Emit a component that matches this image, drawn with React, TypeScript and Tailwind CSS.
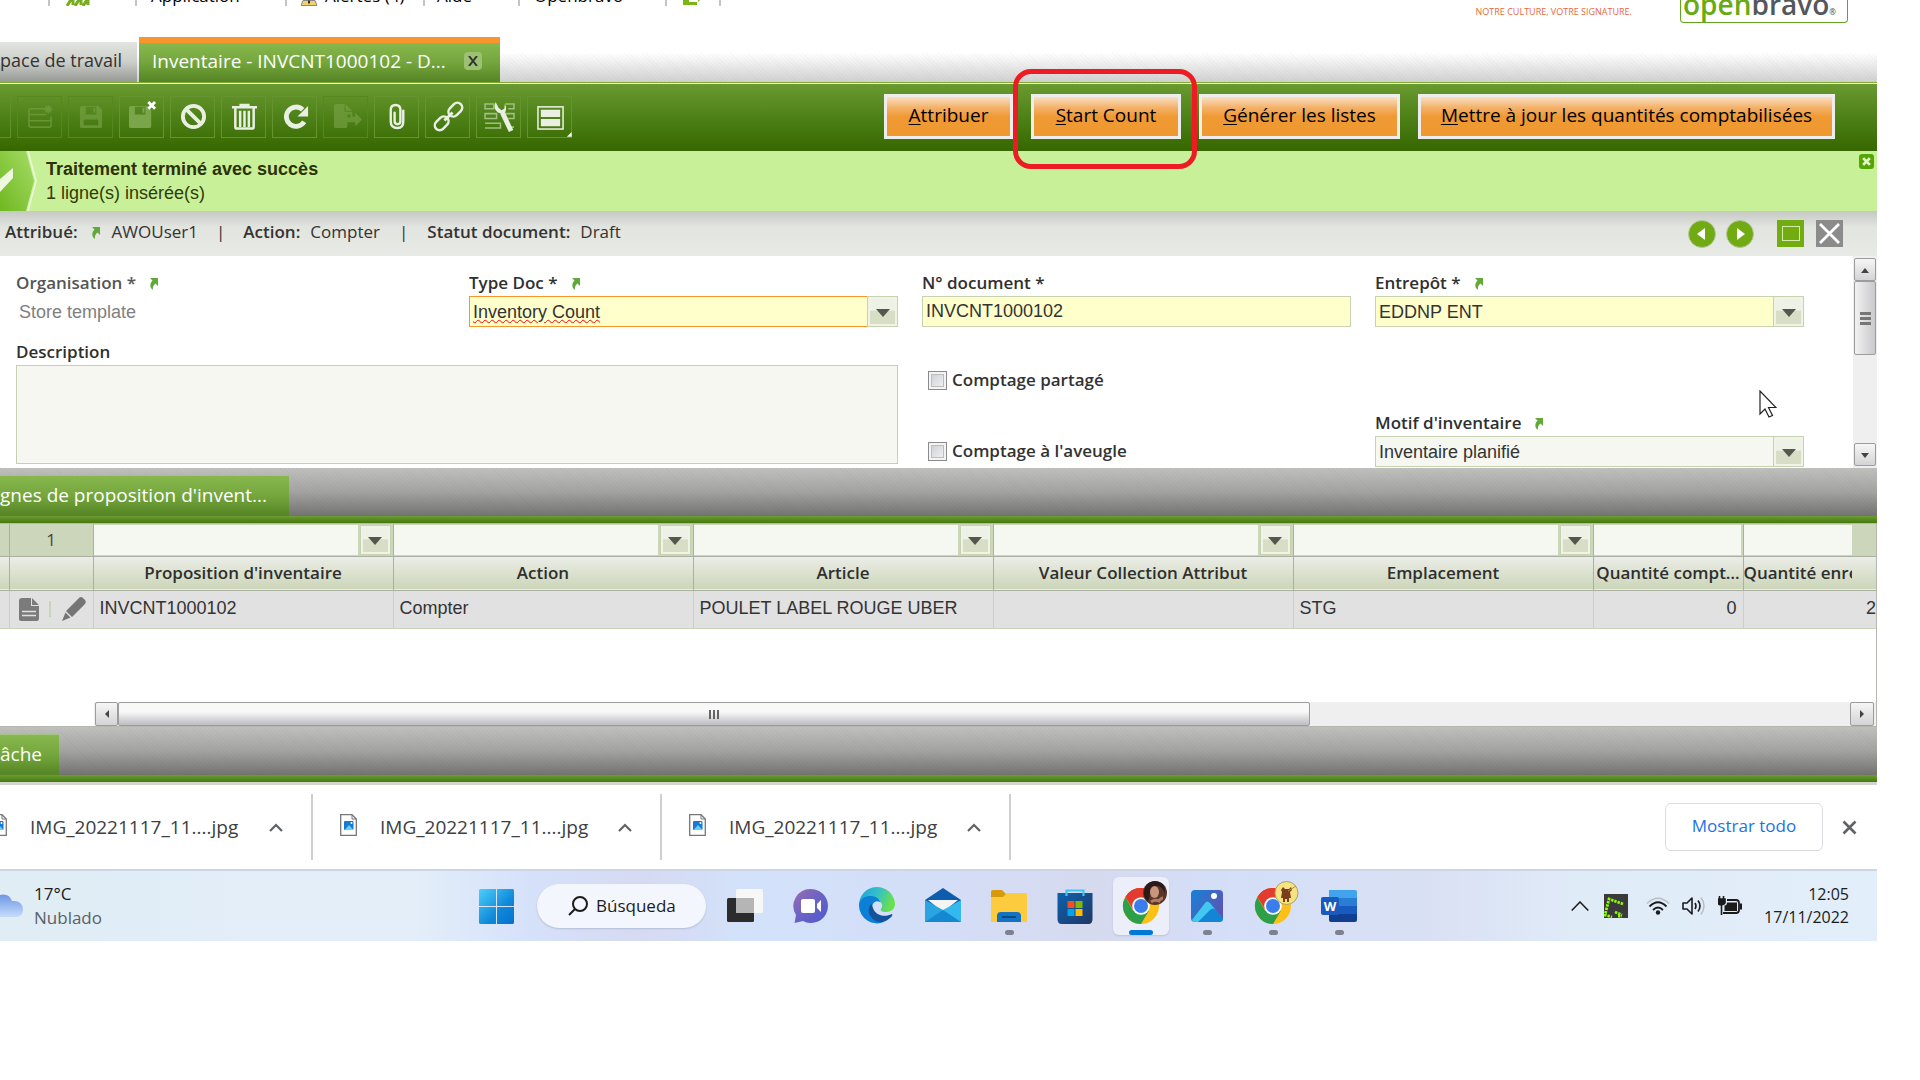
import React, { useId } from "react";

const STRIPES =
  "bg-[repeating-linear-gradient(45deg,rgba(0,0,0,0.02)_0px,rgba(0,0,0,0.02)_1px,transparent_1px,transparent_3px)]";

function LinkArrow() {
  return (
    <svg viewBox="0 0 10 13" className="h-[13px] w-[10px] shrink-0" aria-hidden="true">
      <path d="M2 1h8v8l-2.500-2.500C5.500 8 4.500 10 5 13 1.500 10.500 1.500 6.500 4.500 3.500z" fill="#63a83a" />
    </svg>
  );
}

function ArrowButton({ label }: { label: string }) {
  return (
    <button
      type="button"
      aria-label={label}
      className="flex w-[31px] shrink-0 items-center justify-center border border-[#c7d3b0] bg-linear-to-b from-[#eef1e6] from-45% to-[#d8dec6] to-50% shadow-[inset_0_0_0_2px_#f0f4e6]"
    >
      <svg viewBox="0 0 14 8" className="mt-[2px] h-[8px] w-[14px]">
        <path d="M0 0h14L7 8z" fill="#55564d" />
      </svg>
    </button>
  );
}

function FieldLabel({ id, text, link, dim }: { id?: string; text: string; link?: boolean; dim?: boolean }) {
  return (
    <div className="flex h-[26px] items-center gap-3">
      <label htmlFor={id} className={dim ? "font-semibold text-[#555]" : "font-semibold text-[#2f2f2f]"}>
        {text}
      </label>
      {link && <LinkArrow />}
    </div>
  );
}

function Combo({ label, value, tone }: { label: string; value: string; tone: "focus" | "required" | "plain" }) {
  const id = useId();
  const tones = {
    focus: "border-[#f8952d] bg-[#ffffcc] underline decoration-[#f00] decoration-wavy decoration-1 underline-offset-1",
    required: "border-[#c7d3b0] bg-[#ffffcc]",
    plain: "border-[#c7d3b0] bg-[#f5f7f0]",
  };
  return (
    <div className="min-w-0">
      <FieldLabel id={id} text={label} link />
      <div className="flex h-[31px]">
        <input
          id={id}
          defaultValue={value}
          spellCheck={false}
          className={
            "min-w-0 flex-1 border border-r-0 px-[3px] font-['Liberation_Sans',sans-serif] text-[18px] text-[#333] outline-none " +
            tones[tone]
          }
        />
        <ArrowButton label={"Ouvrir " + label} />
      </div>
    </div>
  );
}

function Check({ label, className }: { label: string; className: string }) {
  return (
    <label className={"flex h-[20px] items-center gap-[5px] font-semibold text-[#333] " + className}>
      <input
        type="checkbox"
        className="size-[19px] appearance-none border border-[#8a8a8a] bg-linear-to-br from-[#c8cbd0] to-[#f6f6f6] shadow-[inset_0_0_0_2px_#f4f4f4,inset_0_0_0_3px_#bdbdbd]"
      />
      {label}
    </label>
  );
}

const dim = "#7ba54a";
const lite = "#e9efe3";
const toolIcons: { name: string; icon: React.ReactNode; on?: boolean }[] = [
  {
    name: "Insérer une ligne",
    icon: (
      <g fill="none" stroke={dim} strokeWidth="1.600">
        <path d="M19 6H4q-2 0-2 2v15q0 2 2 2h19q2 0 2-2V14M2 12h18M2 18.500h23M22 2v9M17.500 6.500h9M19 3.500l6 6M25 3.500l-6 6" />
      </g>
    ),
  },
  {
    name: "Enregistrer",
    icon: <path fillRule="evenodd" d="M4 3h17l4 4v17q0 2-2 2H4q-2 0-2-2V5q0-2 2-2zm4 1v8h11V4zm8 1h2v5h-2zM7 17q-1 0-1 1v5h15v-5q0-1-1-1z" fill={dim} />,
  },
  {
    name: "Enregistrer et fermer",
    icon: (
      <g>
        <path fillRule="evenodd" d="M2 3h17l4 4v17q0 2-2 2H2q-2 0-2-2V5q0-2 2-2zm4 1v8h11V4zm8 1h2v5h-2z" fill={dim} />
        <path d="M20-1l7 7M27-1l-7 7" stroke="#fff" strokeWidth="3" />
      </g>
    ),
    on: true,
  },
  {
    name: "Annuler",
    icon: (
      <g fill="none" stroke={lite} strokeWidth="4">
        <circle cx="14" cy="14" r="11" />
        <path d="M6 6l16 16" />
      </g>
    ),
    on: true,
  },
  {
    name: "Supprimer",
    icon: (
      <g fill="none" stroke={lite} strokeWidth="2.600">
        <path d="M1 4.500h26M10 3V2h8v1M4.500 5v19.500q0 2 2 2h15q2 0 2-2V5M9.500 8v17M14 8v17M18.500 8v17" />
      </g>
    ),
    on: true,
  },
  {
    name: "Actualiser",
    icon: (
      <g>
        <path d="M23 19.500A10 10 0 1 1 21.500 7" fill="none" stroke={lite} strokeWidth="5" />
        <path d="M27 3v11H16z" fill={lite} />
      </g>
    ),
    on: true,
  },
  {
    name: "Exporter",
    icon: <path d="M3 1h9v8h8v5h3v-4l7 7-7 7v-4h-8v-5h3v-3h-3v11q0 3-2 3H3q-2 0-2-2V3q0-2 2-2zm10 0l7 7h-7z" fill={dim} />,
  },
  {
    name: "Joindre",
    icon: (
      <path
        d="M11 10v9q0 3 3 3t3-3V7q0-5-5-5M12 2Q7 2 7 7v12q0 7 7 7 6 0 6-7V8"
        fill="none"
        stroke={lite}
        strokeWidth="2.500"
        strokeLinecap="round"
      />
    ),
    on: true,
  },
  {
    name: "Lier",
    icon: (
      <g fill="none" stroke={lite} strokeWidth="2.600" transform="rotate(-45 14 14)">
        <rect x="-4" y="9" width="16" height="10" rx="5" />
        <rect x="16" y="9" width="16" height="10" rx="5" />
        <path d="M8 14h12" strokeWidth="3" />
      </g>
    ),
    on: true,
  },
  {
    name: "Outils",
    icon: (
      <g fill="none">
        <path d="M-1 1h9v5h-9zM20 1h9v5h-6M-1 11h12v5H-1zM19 11h10v5h-7M-1 21h16v5H-1M25 25h4" stroke="#a0bf80" strokeWidth="1.600" />
        <path d="M17 10l9 19" stroke={lite} strokeWidth="5" />
        <path d="M10-1q-3 7 2 10.500 5 3 8 0 2-4-.5-8.500l-.5 5-3 1.500-3-2.500z" fill={lite} />
      </g>
    ),
    on: true,
  },
  {
    name: "Vue",
    icon: (
      <g>
        <rect x="1" y="4" width="26" height="23" fill="none" stroke={lite} strokeWidth="1.600" />
        <path d="M4 7h20v7.500H4zM4 16.500h20V24H4z" fill={lite} />
        <path d="M36 35h-5l5-5z" fill="#fff" />
      </g>
    ),
    on: true,
  },
];

function ActionButton({ first, rest, className }: { first: string; rest: string; className: string }) {
  return (
    <button
      type="button"
      className={
        "h-[45px] border-[3px] border-[#ededed] bg-[linear-gradient(to_bottom,#fae0c2_0%,#f3b068_28%,#f09a35_50%,#ef982f_100%)] pb-[3px] whitespace-nowrap text-[19px] text-black " +
        className
      }
    >
      <span className="underline underline-offset-2">{first}</span>
      {rest}
    </button>
  );
}

function Band({ title, className }: { title: string; className: string }) {
  return (
    <>
      <div className="h-[48px] bg-linear-to-b from-[#c0c0bf] via-[#a3a3a2] to-[#737371]">
        <div className={"flex h-full items-end " + STRIPES}>
          <button
            type="button"
            className={
              "h-[41px] border-t border-[#a4c484] bg-linear-to-b from-[#86b84e] via-[#74a63d] to-[#558424] pb-[2px] text-left text-[19px] whitespace-nowrap text-white " +
              className
            }
          >
            {title}
          </button>
        </div>
      </div>
      <div className="h-[7px] bg-linear-to-b from-[#6d9d33] to-[#45780d]" />
    </>
  );
}

function ScrollButton({ path, label, className }: { path: string; label: string; className: string }) {
  return (
    <button
      type="button"
      aria-label={label}
      className={"flex shrink-0 items-center justify-center rounded-[2px] border border-[#9c9c9c] bg-linear-to-b from-[#f6f6f6] to-[#d4d4d6] " + className}
    >
      <svg viewBox="0 0 10 10" className="size-[10px]">
        <path d={path} fill="#444" />
      </svg>
    </button>
  );
}

const columns = [
  { name: "Proposition d'inventaire", combo: true },
  { name: "Action", combo: true },
  { name: "Article", combo: true },
  { name: "Valeur Collection Attribut", combo: true },
  { name: "Emplacement", combo: true },
  { name: "Quantité compt…", combo: false },
];

function LinesTable() {
  return (
    <table className="w-full table-fixed border-collapse">
      <colgroup>
        <col className="w-[9px]" />
        <col className="w-[84px]" />
        <col className="w-[300px]" />
        <col className="w-[300px]" />
        <col className="w-[300px]" />
        <col className="w-[300px]" />
        <col className="w-[300px]" />
        <col className="w-[150px]" />
        <col />
        <col className="w-[24px]" />
      </colgroup>
      <thead>
        <tr className="h-[32px] bg-[#ccd6ba]">
          <td className="border-r border-[#abb0a5] p-0" />
          <td className="border-r border-[#abb0a5] p-0 text-center text-[#444]">1</td>
          {columns.map((c) => (
            <td key={c.name} className="border-r border-[#abb0a5] p-0">
              <div className="flex h-[30px] gap-[2px] pr-[2px]">
                <input aria-label={"Filtrer " + c.name} className="min-w-0 flex-1 bg-[#f5f8f0] outline-none" />
                {c.combo && <ArrowButton label={"Filtre " + c.name} />}
              </div>
            </td>
          ))}
          <td className="p-0">
            <div className="flex h-[30px]">
              <input aria-label="Filtrer Quantité enregistrée" className="min-w-0 flex-1 bg-[#f5f8f0] outline-none" />
            </div>
          </td>
          <td className="p-0" />
        </tr>
        <tr className="h-[34px] border-t border-b border-[#abb0a5] bg-linear-to-b from-[#ebede7] to-[#ccd6b8] text-[#2f2f2f]">
          <td className="border-r border-[#abb0a5] p-0" />
          <td className="border-r border-[#abb0a5] p-0" />
          {columns.map((c) => (
            <th key={c.name} scope="col" className="overflow-hidden border-r border-[#abb0a5] p-0 text-center font-semibold whitespace-nowrap">
              {c.name}
            </th>
          ))}
          <th scope="col" className="overflow-hidden p-0 text-left font-semibold whitespace-nowrap">
            Quantité enregistrée
          </th>
          <td className="p-0" />
        </tr>
      </thead>
      <tbody className="font-['Liberation_Sans',sans-serif] text-[18px] text-[#333]">
        <tr className="h-[38px] border-b border-[#c9d3b6] bg-[#e1e1e1]">
          <td className="border-r border-[#c9d3b6] p-0" />
          <td className="border-r border-[#c9d3b6] p-0">
            <div className="flex items-center justify-between pr-[7px] pl-[9px]">
              <button type="button" aria-label="Voir le formulaire">
                <svg viewBox="0 0 20 23" className="h-[23px] w-[20px]">
                  <path d="M3 0h9v8h8v12q0 3-2 3H3q-3 0-3-2V3q0-3 3-3zm10 0l7 7h-7z" fill="#7b7b7b" />
                  <path d="M3 13.500h14M3 17.500h14" stroke="#e1e1e1" strokeWidth="1.500" />
                </svg>
              </button>
              <span className="h-4 w-[2px] bg-[#c9d6b3]" />
              <button type="button" aria-label="Modifier">
                <svg viewBox="0 0 24 24" className="size-[24px]">
                  <path d="M17 1q2-2 4 0l2 2q1.500 2 0 4L10 20l-6-6zM3.500 15.500l5 5L0 24z" fill="#757575" />
                </svg>
              </button>
            </div>
          </td>
          <td className="border-r border-[#c9d3b6] px-[6px] pt-0 pb-[2px]">INVCNT1000102</td>
          <td className="border-r border-[#c9d3b6] px-[6px] pt-0 pb-[2px]">Compter</td>
          <td className="border-r border-[#c9d3b6] px-[6px] pt-0 pb-[2px]">POULET LABEL ROUGE UBER</td>
          <td className="border-r border-[#c9d3b6] p-0" />
          <td className="border-r border-[#c9d3b6] px-[6px] pt-0 pb-[2px]">STG</td>
          <td className="border-r border-[#c9d3b6] px-[6px] pt-0 pb-[2px] text-right">0</td>
          <td colSpan={2} className="px-0 pt-0 pb-[2px] text-right">
            2
          </td>
        </tr>
      </tbody>
    </table>
  );
}

function Chevron() {
  return (
    <svg viewBox="0 0 14 9" className="h-[9px] w-[14px]" aria-hidden="true">
      <path d="M1 8l6-6 6 6" fill="none" stroke="#5f6368" strokeWidth="2.200" />
    </svg>
  );
}

function Download({ className }: { className: string }) {
  return (
    <div className={"flex h-[66px] shrink-0 items-center border-r-2 border-[#cfcfcf] " + className}>
      <svg viewBox="0 0 17 22" className="mb-1 h-[22px] w-[17px] shrink-0" aria-hidden="true">
        <path d="M.7.700H12l4.300 4.300v16.300H.7z" fill="#fff" stroke="#777" strokeWidth="1.300" />
        <path d="M12 .7V5h4.300" fill="none" stroke="#777" />
        <rect x="4" y="7" width="9.500" height="9" rx="1" fill="#1b78d0" />
        <path d="M4.500 16l4.500-5 4.500 5z" fill="#5fd3f7" />
        <circle cx="11.500" cy="9" r="1" fill="#fff" />
      </svg>
      <span className="ml-[23px] flex-1 text-[19px] text-[#3c4043]">IMG_20221117_11....jpg</span>
      <button type="button" aria-label="Options du fichier" className="mr-[28px]">
        <Chevron />
      </button>
    </div>
  );
}

function ChromeLogo() {
  return (
    <g>
      <circle cx="18" cy="18" r="18" fill="#fbc116" />
      <path d="M18 18L2.400 9A18 18 0 0 1 33.600 9z" fill="#e33b2e" />
      <path d="M18 9h15.600A18 18 0 0 0 2.400 9l8 13z" fill="#e33b2e" />
      <path d="M2.400 9A18 18 0 0 0 18 36l8-13.500-8 3-8-3z" fill="#2c9f48" />
      <circle cx="18" cy="18" r="8.800" fill="#fff" />
      <circle cx="18" cy="18" r="7" fill="#3b7ded" />
    </g>
  );
}

const apps: { name: string; state: "none" | "open" | "active"; art: React.ReactNode }[] = [
  {
    name: "Vista de tareas",
    state: "none",
    art: (
      <g>
        <rect x="0" y="10" width="27" height="24" rx="1.500" fill="#2c2c2c" />
        <rect x="9" y="1" width="27" height="24" rx="1.500" fill="#f7f7f7" />
        <path d="M9 10h18v15H9z" fill="#b5b5b5" />
      </g>
    ),
  },
  {
    name: "Chat",
    state: "none",
    art: (
      <g>
        <linearGradient id="chat" x1="0" y1="0" x2="1" y2="1">
          <stop offset="0" stopColor="#9a6db0" />
          <stop offset=".5" stopColor="#6a63c4" />
          <stop offset="1" stopColor="#4d58cf" />
        </linearGradient>
        <path d="M18 1a17 17 0 1 1-8 32L1.500 35 3 27A17 17 0 0 1 18 1z" fill="url(#chat)" />
        <rect x="8" y="11" width="14" height="14" rx="2" fill="#fff" />
        <path d="M24 16l4-4v12l-4-4z" fill="#fff" />
      </g>
    ),
  },
  {
    name: "Edge",
    state: "none",
    art: (
      <g>
        <linearGradient id="edgeTop" x1="0" y1="0" x2="1" y2=".3">
          <stop offset="0" stopColor="#1c9fdb" />
          <stop offset=".55" stopColor="#35c1c9" />
          <stop offset="1" stopColor="#68e04e" />
        </linearGradient>
        <path d="M0 18a18 18 0 0 1 36-2c0 5-4 8-9 8-4 0-6-1-5-3 3-4 0-8-4-8-8 0-12 6-18 5z" fill="url(#edgeTop)" />
        <path d="M0 18C0 12 5 8 11 8c5 0 9 2 10 6-4-2-8 1-8 6 0 8 5 13 12 14A18 18 0 0 1 0 18z" fill="#0c7fd6" />
        <path d="M12 16c-3 4-3 9 0 13 4 5 11 8 19 1 2-1 3-4 2-4-8 4-17 1-19-6-.5-2-1-3-2-4z" fill="#12539b" />
      </g>
    ),
  },
  {
    name: "Correo",
    state: "none",
    art: (
      <g>
        <path d="M0 12L18 0l18 12v6H0z" fill="#0e5cad" />
        <path d="M3 12h30L18 24z" fill="#f4f4f4" />
        <path d="M0 12l18 10v12H0z" fill="#2aa5e2" />
        <path d="M36 12L18 22 0 34h36z" fill="#34b9ee" />
        <path d="M18 22l18 12H0z" fill="#1588d2" />
      </g>
    ),
  },
  {
    name: "Explorador",
    state: "open",
    art: (
      <g>
        <path d="M0 4q0-2 2-2h9l4 4v4H0z" fill="#d99a09" />
        <path d="M0 9h12l4-4h19q1 0 1 1v28H0z" fill="#fccb3e" />
        <path d="M6 34v-6q0-4 4-4h16q4 0 4 4v6z" fill="#1272c4" />
        <path d="M11 29h14" stroke="#0b4a86" strokeWidth="2" />
      </g>
    ),
  },
  {
    name: "Store",
    state: "none",
    art: (
      <g>
        <linearGradient id="store" x1="0" y1="0" x2="1" y2="1">
          <stop offset="0" stopColor="#0d62b0" />
          <stop offset="1" stopColor="#203763" />
        </linearGradient>
        <path d="M.5 5h35v26q0 5-4 5h-27q-4 0-4-5z" fill="url(#store)" />
        <path d="M9.500 8V2.500h17V8" fill="none" stroke="#3cc5f3" strokeWidth="2.200" />
        <path d="M10.500 13h7v7h-7z" fill="#f25022" />
        <path d="M18.500 13h7v7h-7z" fill="#7fba00" />
        <path d="M10.500 21h7v7h-7z" fill="#00a4ef" />
        <path d="M18.500 21h7v7h-7z" fill="#ffb900" />
      </g>
    ),
  },
  {
    name: "Chrome",
    state: "active",
    art: (
      <g>
        <ChromeLogo />
        <circle cx="32" cy="5" r="12" fill="#5a3529" />
        <path d="M21 6q0-12 11-13 11 1 10 12-3-6-7-7-7-1-8 6 0 5-2 9-4-3-4-7z" fill="#2b1a17" />
        <ellipse cx="31.500" cy="4" rx="4.500" ry="6" fill="#c9957c" />
        <path d="M28 14q4-3 8-1 2-3 4-3" fill="none" stroke="#b07a62" strokeWidth="3" />
      </g>
    ),
  },
  {
    name: "Fotos",
    state: "open",
    art: (
      <g>
        <linearGradient id="photo" x1="0" y1="0" x2="1" y2=".6">
          <stop offset="0" stopColor="#1583d8" />
          <stop offset="1" stopColor="#5b55b5" />
        </linearGradient>
        <rect x="2" y="2" width="32" height="32" rx="4" fill="url(#photo)" />
        <path d="M3 32l13-17q2-3 5 0l13 16q-1 3-4 3H6q-2 0-3-2z" fill="#41c8f2" />
        <path d="M9 34l12-12q3-3 6 0l7 8q0 4-4 4z" fill="#1484d5" />
        <circle cx="25" cy="8" r="3" fill="#fff" />
      </g>
    ),
  },
  {
    name: "Chrome 2",
    state: "open",
    art: (
      <g>
        <ChromeLogo />
        <circle cx="31.500" cy="5" r="11.500" fill="#f6e27e" stroke="#a8a06e" />
        <path d="M28-1l2 2h4l2-2 1 3-2 2 1 6h-2v4h-2v-3h-2v3h-2v-4h-2l1-6-1-2z" fill="#7b3d1c" />
        <path d="M33 3l8-5" stroke="#a8905e" />
      </g>
    ),
  },
  {
    name: "Word",
    state: "open",
    art: (
      <g>
        <path d="M8 2h26q2 0 2 2v6H8z" fill="#3fa3ee" />
        <path d="M8 10h28v8H8z" fill="#2b7cd3" />
        <path d="M8 18h28v8H8z" fill="#185abd" />
        <path d="M8 26h28v6q0 2-2 2H10q-2 0-2-2z" fill="#103f91" />
        <rect x="0" y="9" width="18" height="18" rx="2" fill="#185abd" />
        <text x="9" y="22.500" textAnchor="middle" fontSize="13" fontWeight="700" fill="#fff" fontFamily="Open Sans">
          W
        </text>
      </g>
    ),
  },
];

function Taskbar() {
  return (
    <footer className="flex h-[72px] items-center border-t-2 border-[#ccd5e6] bg-[linear-gradient(to_right,#e0edf5_0%,#e4eef9_22%,#d5e2fa_28%,#d6daf2_34%,#d2e2fa_40%,#d4def7_50%,#d6daef_58%,#d4dff8_66%,#d9e0f3_76%,#e0ebf8_84%,#e2eef9_100%)] text-[16px] text-[#1b1b1b]">
      <button type="button" className="flex w-[467px] shrink-0 items-center gap-[11px] text-left text-[17px] leading-[24px]">
        <svg viewBox="0 0 23 24" className="h-[24px] w-[23px]" aria-hidden="true">
          <linearGradient id="cloud" x1="0" y1="0" x2="0" y2="1">
            <stop offset="0" stopColor="#6f96e4" />
            <stop offset="1" stopColor="#c5dcfb" />
          </linearGradient>
          <path d="M0 1Q9-1 12 7q10-1 11 8 0 8-7 8H0z" fill="url(#cloud)" />
        </svg>
        <span className="block">
          <span className="block">17°C</span>
          <span className="block text-[#5a6067]">Nublado</span>
        </span>
      </button>
      <button type="button" aria-label="Inicio" className="ml-3 shrink-0">
        <svg viewBox="0 0 35 35" className="size-[35px]">
          <linearGradient id="win" x1="0" y1="0" x2="1" y2="1">
            <stop offset="0" stopColor="#4bd0fc" />
            <stop offset=".6" stopColor="#1089da" />
            <stop offset="1" stopColor="#0470cc" />
          </linearGradient>
          <path d="M1 0h16v17H0V1zM18 0h16l1 1v16H18zM0 18h17v17H1l-1-1zM18 18h17v16l-1 1H18z" fill="url(#win)" />
        </svg>
      </button>
      <button
        type="button"
        className="ml-[23px] flex h-[44px] w-[169px] shrink-0 items-center gap-2 rounded-full bg-[#f3f6fd] pl-[31px] text-[17px] shadow-[0_1px_2px_#b3bdd4]"
      >
        <svg viewBox="0 0 20 20" className="size-[20px]" aria-hidden="true">
          <circle cx="12" cy="8" r="7" fill="none" stroke="#1b1b1b" strokeWidth="2" />
          <path d="M7 13l-6 6" stroke="#1b1b1b" strokeWidth="2" />
        </svg>
        Búsqueda
      </button>
      <nav className="ml-[6px] flex">
        {apps.map((a) => (
          <div key={a.name} className="flex h-[58px] w-[66px] justify-center">
            <button
              type="button"
              aria-label={a.name}
              className={
                "flex h-[58px] w-[56px] flex-col items-center justify-end gap-[6px] rounded-md " +
                (a.state === "active" ? "bg-[#eceff9] shadow-[0_1px_2px_#b9c2d8]" : "")
              }
            >
              <svg viewBox="0 0 36 36" className="size-[36px] overflow-visible">
                {a.art}
              </svg>
              <span
                className={
                  "h-[5px] rounded-full " +
                  (a.state === "active" ? "w-[24px] bg-[#0078d4]" : a.state === "open" ? "w-[9px] bg-[#7b818d]" : "w-[9px]")
                }
              />
            </button>
          </div>
        ))}
      </nav>
      <div className="ml-auto flex shrink-0 items-center pr-[28px]">
        <svg viewBox="0 0 18 10" className="mr-[15px] h-[10px] w-[18px]" aria-hidden="true">
          <path d="M.700 9.500L9 1l8.300 8.500" fill="none" stroke="#1b1b1b" strokeWidth="1.500" />
        </svg>
        <svg viewBox="0 0 24 24" className="mr-[18px] size-[24px]" aria-hidden="true">
          <rect width="24" height="24" fill="#3a3a3a" />
          <path d="M19 10L5 5 1 21l7 2M11 18l7 3M14 22h4" fill="none" stroke="#8aff00" strokeWidth="2.800" strokeDasharray="2.400 1" />
        </svg>
        <svg viewBox="0 0 24 18" className="mr-[12px] h-[18px] w-[24px]" fill="none" aria-hidden="true">
          <path d="M1 6.500Q12-4 23 6.500" stroke="#b6bec6" strokeWidth="1.500" />
          <path d="M3.500 9.500Q12 1 20.500 9.500M7 13q5-5 10 0" stroke="#1b1b1b" strokeWidth="1.800" />
          <circle cx="12" cy="15.500" r="2.200" fill="#1b1b1b" />
        </svg>
        <svg viewBox="0 0 24 20" className="mr-[12px] h-[20px] w-[24px]" fill="none" aria-hidden="true">
          <path d="M1 7h4l5-5v16l-5-5H1z" stroke="#1b1b1b" strokeWidth="1.600" strokeLinejoin="round" />
          <path d="M13 7q2 3 0 6M16 4.500q4 5.500 0 11" stroke="#1b1b1b" strokeWidth="1.600" />
          <path d="M19 1.500q6 8 0 17" stroke="#b6bec6" strokeWidth="1.500" />
        </svg>
        <svg viewBox="0 0 24 20" className="mr-[22px] h-[20px] w-[24px]" aria-hidden="true">
          <path d="M9 4h9q3 0 3 3v7q0 3-3 3H5" fill="none" stroke="#1b1b1b" strokeWidth="1.800" />
          <path d="M9 6.500h10V15H6.500V9.500q2.500 0 2.500-3zM22 7.500h2v6h-2z" fill="#1b1b1b" />
          <path d="M0 3h7v4q-1 2-3.500 2Q1 9 0 7zM1.500 0v4M5.500 0v4M3.500 8v11" fill="#1b1b1b" stroke="#1b1b1b" strokeWidth="1.600" />
        </svg>
        <div className="text-right leading-[23px]">
          <div>12:05</div>
          <div>17/11/2022</div>
        </div>
      </div>
    </footer>
  );
}

function MenuItem({ text, className }: { text: string; className: string }) {
  return (
    <button type="button" className={"shrink-0 border-r-2 border-[#c4c4c4] text-left text-[17px] leading-[20px] " + className}>
      {text}
    </button>
  );
}

export default function App() {
  const docId = useId();
  const descId = useId();
  return (
    <div className="min-h-screen bg-white pr-[43px] font-['Open_Sans','Noto_Sans',sans-serif] text-[17px] leading-[24px]">
      <div className="relative overflow-hidden">
        <header className="flex h-[82px] flex-col justify-between bg-linear-to-b from-white from-65% to-[#d0d0d0]">
          <div className="flex items-start justify-between">
            <div className="flex h-[6px] items-end overflow-hidden text-black">
              <div className="w-[50px] shrink-0 self-stretch border-r-2 border-[#c4c4c4]" />
              <div className="flex w-[87px] shrink-0 self-stretch border-r-2 border-[#c4c4c4] pl-4">
                <svg viewBox="0 0 24 6" className="h-[6px] w-[24px]" aria-hidden="true">
                  <path d="M1 6l5-8M9 6l5-8M17 6l5-8M7-1v6M15-1v6M22-1v6" stroke="#78ad1c" strokeWidth="3" />
                </svg>
              </div>
              <MenuItem text="Application" className="w-[150px] pl-[14px]" />
              <div className="flex w-[138px] shrink-0 items-end gap-2 border-r-2 border-[#c4c4c4] pl-[14px]">
                <svg viewBox="0 0 16 5" className="h-[6px] w-[16px] shrink-0" aria-hidden="true">
                  <path d="M2 0h12l2 5H0z" fill="#f5cf6b" stroke="#888" />
                  <path d="M7 0h2v3H7z" fill="#333" />
                </svg>
                <button type="button" className="leading-[20px] whitespace-nowrap">
                  Alertes (4)
                </button>
              </div>
              <MenuItem text="Aide" className="w-[95px] pl-[12px]" />
              <MenuItem text="Openbravo" className="w-[147px] pl-[14px]" />
              <div className="flex w-[54px] shrink-0 self-stretch border-r-2 border-[#c4c4c4] pl-4">
                <svg viewBox="0 0 17 5" className="h-[5px] w-[17px]" aria-hidden="true">
                  <path d="M0 0h6v2h8v3H0z" fill="#7cb518" />
                  <path d="M15 0h2l-2 2z" fill="#7cb518" />
                </svg>
              </div>
            </div>
            <div className="flex items-start pr-[29px]">
              <div className="mt-[7px] mr-[48px] h-[9px] overflow-hidden font-['Open_Sans',sans-serif] text-[9px] leading-[10px] text-[#e8683c]">
                NOTRE CULTURE, VOTRE SIGNATURE.
              </div>
              <div className="flex h-[23px] w-[168px] items-end overflow-hidden rounded-b-[4px] border border-t-0 border-[#62a51f] pl-[2px] text-[28px] leading-[36px] font-semibold">
                <span className="text-[#68aa12]">open</span>
                <span className="text-[#55585a]">bravo</span>
                <span className="text-[8px] leading-[20px] text-[#55585a]">®</span>
              </div>
            </div>
          </div>
          <div className="flex items-end">
            <button
              type="button"
              className="mr-[2px] h-[40px] w-[137px] bg-linear-to-b from-[#e2e4df] via-[#cccec9] to-[#969894] pb-[4px] text-left text-[18px] whitespace-nowrap text-[#333]"
            >
              pace de travail
            </button>
            <div className="flex h-[45px] w-[361px] items-center border-t-[6px] border-[#f8952d] bg-linear-to-b from-[#86b84e] via-[#74a63d] to-[#558424] pb-[4px] pl-[13px] text-[19px] text-white">
              <span className="flex-1 whitespace-nowrap">Inventaire - INVCNT1000102 - D...</span>
              <button type="button" aria-label="Fermer l'onglet" className="mr-[18px] flex size-[18px] items-center justify-center rounded bg-[#9cc173]">
                <svg viewBox="0 0 10 10" className="size-[10px]">
                  <path d="M1 0l8 10M9 0L1 10" stroke="#333" strokeWidth="2" />
                </svg>
              </button>
            </div>
            <div className={"h-[29px] flex-1 " + STRIPES} />
          </div>
        </header>

        <div className="border-t border-[#7bb02a]">
          <div className="flex h-[68px] items-center border-t border-white bg-linear-to-b from-[#6a9a30] via-[#4d8117] to-[#376700] pb-[2px]">
            <div className="flex shrink-0 gap-[6px]">
              <div className="h-[42px] w-[11px] border border-l-0 border-[#609028]" />
              {toolIcons.map((t) => (
                <button
                  key={t.name}
                  type="button"
                  aria-label={t.name}
                  className={"flex h-[42px] w-[45px] items-center justify-center border pl-[2px] " + (t.on ? "border-[#649330]" : "border-[#568820]")}
                >
                  <svg viewBox="0 0 28 28" className={"size-[27px] overflow-visible " + (t.on ? "" : "opacity-60")}>
                    {t.icon}
                  </svg>
                </button>
              ))}
            </div>
            <div className="ml-auto flex shrink-0 items-center gap-[18px] pr-[42px]">
              <ActionButton first="A" rest="ttribuer" className="w-[129px]" />
              <div className="relative">
                <ActionButton first="S" rest="tart Count" className="w-[150px]" />
                <div className="pointer-events-none absolute -top-[25px] -right-[16px] -bottom-[30px] -left-[18px] rounded-[18px] border-[5px] border-[#ed1c24]" />
              </div>
              <ActionButton first="G" rest="énérer les listes" className="w-[201px]" />
              <ActionButton first="M" rest="ettre à jour les quantités comptabilisées" className="w-[417px]" />
            </div>
          </div>
        </div>

        <div className="flex h-[60px] items-start bg-[#c8f098] font-['Liberation_Sans',sans-serif] text-[18px] text-[#333a08]">
          <svg viewBox="0 0 37 60" className="mr-[9px] h-[60px] w-[37px] shrink-0" aria-hidden="true">
            <linearGradient id="ok" x1="1" y1="0" x2="0" y2="1">
              <stop offset="0" stopColor="#a5dc66" />
              <stop offset="1" stopColor="#6fb820" />
            </linearGradient>
            <path d="M0 0h26l8 30-8 30H0z" fill="url(#ok)" />
            <path d="M28 0l8 30-8 30" fill="none" stroke="#eefadd" strokeWidth="1.500" />
            <path d="M0 28l13-11v10L0 41z" fill="#eef8df" />
          </svg>
          <p className="pt-[6px]">
            <strong className="block text-[#2b3205]">Traitement terminé avec succès</strong>
            1 ligne(s) insérée(s)
          </p>
          <button type="button" aria-label="Fermer le message" className="mt-[3px] mr-[3px] ml-auto flex size-[15px] items-center justify-center rounded-[3px] bg-[#55a605]">
            <svg viewBox="0 0 8 8" className="size-[9px]">
              <path d="M1 1l6 6M7 1L1 7" stroke="#e3f7c8" strokeWidth="2.500" />
            </svg>
          </button>
        </div>

        <div className="bg-linear-to-b from-[#c6c8c4] via-[#e2e4df] via-35% to-[#e8ebe5]">
          <div className="flex h-[45px] items-center pb-[3px] pl-[5px] whitespace-nowrap text-[#333]">
            <span className="font-semibold">Attribué:</span>
            <a href="#user" className="ml-[12px] flex items-center gap-3">
              <LinkArrow />
              AWOUser1
            </a>
            <span className="mx-[18px]">|</span>
            <span className="font-semibold">Action:</span>
            <span className="ml-[10px]">Compter</span>
            <span className="mx-[19px]">|</span>
            <span className="font-semibold">Statut document:</span>
            <span className="ml-[10px]">Draft</span>
            <div className="ml-auto flex items-center gap-[10px] pt-[3px] pr-[34px]">
              {["M17 8v12l-8-6z", "M11 8v12l8-6z"].map((d, i) => (
                <button key={d} type="button" aria-label={i ? "Suivant" : "Précédent"}>
                  <svg viewBox="0 0 28 28" className="size-[28px]">
                    <circle cx="14" cy="14" r="13.500" fill="#71ab13" stroke="#b5c79a" />
                    <path d={d} fill="#fff" />
                  </svg>
                </button>
              ))}
              <button type="button" aria-label="Agrandir" className="ml-[13px] flex size-[27px] items-center justify-center bg-[#72ac10]">
                <span className="h-[15px] w-[18px] border border-[#d2ecaa]" />
              </button>
              <button type="button" aria-label="Fermer" className="ml-[2px] size-[27px] bg-[#8b8b8b]">
                <svg viewBox="0 0 27 27" className="size-[27px]">
                  <path d="M4 4l19 19M23 4L4 23" stroke="#fff" strokeWidth="2.800" />
                </svg>
              </button>
            </div>
          </div>
        </div>

        <div className="flex h-[212px] overflow-hidden">
          <form className="min-w-0 flex-1 pt-[14px] pr-[49px] pl-4">
            <div className="grid grid-cols-4 gap-x-6">
              <div>
                <FieldLabel text="Organisation *" link dim />
                <p className="pt-1 pl-[3px] font-['Liberation_Sans',sans-serif] text-[18px] text-[#808080]">Store template</p>
              </div>
              <Combo label="Type Doc *" value="Inventory Count" tone="focus" />
              <div>
                <FieldLabel id={docId} text="N° document *" />
                <input
                  id={docId}
                  defaultValue="INVCNT1000102"
                  className="h-[31px] w-full border border-[#c7d3b0] bg-[#ffffcc] px-[3px] font-['Liberation_Sans',sans-serif] text-[18px] text-[#333]"
                />
              </div>
              <Combo label="Entrepôt *" value="EDDNP ENT" tone="required" />
            </div>
            <div className="mt-3 grid grid-cols-4 gap-x-6">
              <div className="col-span-2">
                <FieldLabel id={descId} text="Description" />
                <textarea id={descId} className="block h-[99px] w-full resize-none border border-[#c7cfb6] bg-[#f5f7f0]" />
              </div>
              <div className="pl-[6px]">
                <Check label="Comptage partagé" className="mt-[31px]" />
                <Check label="Comptage à l'aveugle" className="mt-[51px]" />
              </div>
              <div className="pt-[71px]">
                <Combo label="Motif d'inventaire" value="Inventaire planifié" tone="plain" />
              </div>
            </div>
          </form>
          <div className="flex w-[24px] flex-col bg-[#efefef] px-[1px] py-[2px]">
            <ScrollButton path="M5 3l4 5H1z" label="Monter" className="h-[23px]" />
            <div className="flex h-[74px] flex-col items-center justify-center gap-[2px] rounded-[2px] border border-[#9c9c9c] bg-linear-to-r from-[#f2f2f2] to-[#c9c9cc]">
              <span className="h-[3px] w-[11px] bg-[#777]" />
              <span className="h-[3px] w-[11px] bg-[#777]" />
              <span className="h-[3px] w-[11px] bg-[#777]" />
            </div>
            <ScrollButton path="M5 8l4-5H1z" label="Descendre" className="mt-auto h-[23px]" />
          </div>
        </div>

        <Band title="gnes de proposition d'invent..." className="w-[289px]" />

        <div className="h-[204px] border border-l-0 border-[#b5b8b0]">
          <div className="flex h-full flex-col justify-between">
            <LinesTable />
            <div className="ml-[94px] flex h-[24px] bg-[#efefef] pr-[2px] pl-[1px]">
              <ScrollButton path="M3 5l4-4v8z" label="Gauche" className="w-[23px]" />
              <div className="flex w-[67%] items-center justify-center gap-[2px] rounded-[2px] border border-[#9c9c9c] bg-linear-to-b from-[#f8f8f8] from-40% to-[#bdbdc2]">
                <span className="h-[9px] w-[2px] bg-[#666]" />
                <span className="h-[9px] w-[2px] bg-[#666]" />
                <span className="h-[9px] w-[2px] bg-[#666]" />
              </div>
              <ScrollButton path="M7 5L3 1v8z" label="Droite" className="ml-auto w-[24px]" />
            </div>
          </div>
        </div>

        <Band title="âche" className="w-[59px]" />
        <div className="h-[3px] bg-[#d3d6cf]" />

        <div className="flex h-[84px] items-center">
          <Download className="-ml-[10px] w-[323px]" />
          <Download className="w-[349px] pl-[27px]" />
          <Download className="w-[349px] pl-[27px]" />
          <button type="button" className="ml-auto h-[48px] w-[158px] rounded-md border border-[#dadce0] pb-[2px] text-[17px] font-medium text-[#1a73e8]">
            Mostrar todo
          </button>
          <button type="button" aria-label="Cerrar" className="mr-[20px] ml-[19px]">
            <svg viewBox="0 0 15 15" className="size-[15px]">
              <path d="M1.500 1.500l12 12M13.500 1.500l-12 12" stroke="#5f6368" strokeWidth="2.600" />
            </svg>
          </button>
        </div>

        <Taskbar />

        <svg viewBox="0 0 18 28" className="absolute top-[390px] right-[100px] h-[28px] w-[18px]" aria-hidden="true">
          <path d="M1 1v23l5-5 4 8 3.500-1.500-4-8H17z" fill="#fff" stroke="#222" strokeWidth="1.200" />
        </svg>
      </div>
    </div>
  );
}
